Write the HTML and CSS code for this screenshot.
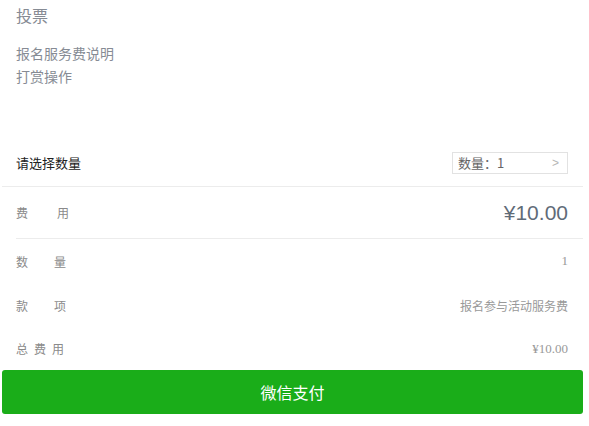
FILE: index.html
```html
<!DOCTYPE html>
<html lang="zh">
<head>
<meta charset="utf-8">
<link rel="stylesheet" href="styles.css">
</head>
<body>
<div class="page">
  <div class="intro">
    <div class="title">投票</div>
    <div class="line">报名服务费说明</div>
    <div class="line">打赏操作</div>
  </div>
  <div class="qty-row">
    <span class="qty-label">请选择数量</span>
    <div class="qty-box"><span>数量：1</span><span class="chev">&gt;</span></div>
  </div>
  <div class="fee-row">
    <span class="label wide">费<i></i>用</span>
    <span class="price">¥10.00</span>
  </div>
  <div class="row">
    <span class="label">数<i></i>量</span>
    <span class="value num">1</span>
  </div>
  <div class="row">
    <span class="label">款<i></i>项</span>
    <span class="value">报名参与活动服务费</span>
  </div>
  <div class="row last">
    <span class="label tight">总<i></i>费<i></i>用</span>
    <span class="value num">¥10.00</span>
  </div>
  <button class="pay">微信支付</button>
</div>
</body>
</html>
```
FILE: styles.css
```css
* { box-sizing: border-box; }
body {
  margin: 0;
  background: #fff;
  font-family: "Noto Sans CJK SC", "Liberation Sans", sans-serif;
}
.page {
  width: 581px;
  margin-left: 2px;
}
.intro {
  padding: 4px 14px 0;
  color: #868b94;
  height: 141px;
}
.title {
  font-size: 16px;
  line-height: 22px;
  height: 38px;
}
.line {
  font-size: 14px;
  line-height: 23px;
}
.qty-row {
  height: 46px;
  display: flex;
  align-items: center;
  justify-content: space-between;
  padding: 0 15px 2px 14px;
  border-bottom: 1px solid #ececec;
}
.qty-label {
  font-size: 13px;
  color: #222;
}
.qty-box {
  width: 116px;
  height: 22px;
  border: 1px solid #e2e2e2;
  display: flex;
  align-items: center;
  justify-content: space-between;
  padding: 0 8px 0 5px;
  font-size: 13px;
  color: #666;
}
.chev {
  color: #b5b5b5;
  font-size: 12px;
  font-family: "Liberation Sans", sans-serif;
}
.fee-row {
  height: 52px;
  margin-left: 14px;
  padding-right: 15px;
  display: flex;
  align-items: center;
  justify-content: space-between;
  border-bottom: 1px solid #ececec;
}
.label {
  font-size: 12px;
  color: #8a8a8a;
  display: flex;
  align-items: center;
}
.label i { display: inline-block; width: 26px; }
.label.wide i { width: 29px; }
.label.tight i { width: 6px; }
.price {
  font-size: 21px;
  color: #5f6b78;
  font-family: "Liberation Sans", sans-serif;
}
.row {
  height: 44px;
  margin-left: 14px;
  padding-right: 15px;
  display: flex;
  align-items: center;
  justify-content: space-between;
}
.row.last { height: 43px; }
.value {
  font-size: 12px;
  color: #999;
}
.value.num {
  font-family: "Liberation Serif", serif;
  font-size: 13px;
}
.pay {
  display: block;
  width: 581px;
  height: 44px;
  border: none;
  border-radius: 3px;
  background: #1aad19;
  color: #fff;
  font-size: 16px;
  font-family: "Noto Sans CJK SC", sans-serif;
}
```
